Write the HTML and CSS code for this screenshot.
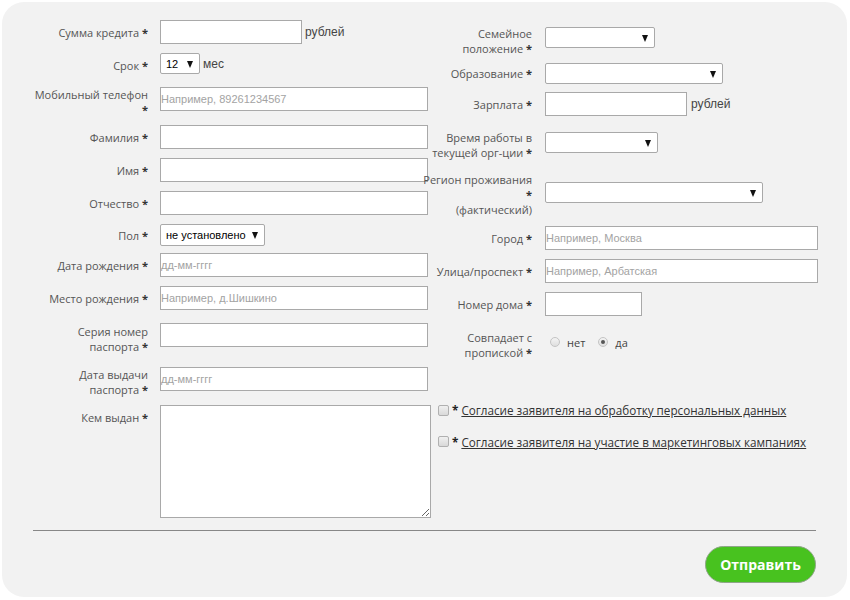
FILE: index.html
```html
<!DOCTYPE html>
<html lang="ru">
<head>
<meta charset="utf-8">
<title>Заявка на кредит</title>
<link rel="stylesheet" href="styles.css">
</head>
<body>
<form class="panel">
  <div class="columns">
    <div class="col-left">
      <label class="lbl">Сумма кредита <b class="req">*</b></label>
      <div class="ctl"><input class="inp w142" type="text"><span class="unit">рублей</span></div>

      <label class="lbl">Срок <b class="req">*</b></label>
      <div class="ctl"><span class="selwrap w39"><select class="sel"><option>12</option></select></span><span class="unit">мес</span></div>

      <label class="lbl p0">Мобильный телефон<br><b class="req">*</b></label>
      <div class="ctl"><input class="inp w267" type="text" placeholder="Например, 89261234567"></div>

      <label class="lbl">Фамилия <b class="req">*</b></label>
      <div class="ctl"><input class="inp w267" type="text"></div>

      <label class="lbl">Имя <b class="req">*</b></label>
      <div class="ctl"><input class="inp w267" type="text"></div>

      <label class="lbl">Отчество <b class="req">*</b></label>
      <div class="ctl"><input class="inp w267" type="text"></div>

      <label class="lbl p4">Пол <b class="req">*</b></label>
      <div class="ctl"><span class="selwrap w104"><select class="sel h22"><option>не установлено</option></select></span></div>

      <label class="lbl">Дата рождения <b class="req">*</b></label>
      <div class="ctl"><input class="inp w267" type="text" placeholder="дд-мм-гггг"></div>

      <label class="lbl">Место рождения <b class="req">*</b></label>
      <div class="ctl"><input class="inp w267" type="text" placeholder="Например, д.Шишкино"></div>

      <label class="lbl p1">Серия номер<br>паспорта <b class="req">*</b></label>
      <div class="ctl"><input class="inp w267" type="text"></div>

      <label class="lbl p0">Дата выдачи<br>паспорта <b class="req">*</b></label>
      <div class="ctl"><input class="inp w267" type="text" placeholder="дд-мм-гггг"></div>

      <label class="lbl">Кем выдан <b class="req">*</b></label>
      <div class="ctl"><textarea class="area"></textarea></div>
    </div>

    <div class="right">
      <div class="col-right">
        <label class="lbl up1">Семейное<br>положение <b class="req">*</b></label>
        <div class="ctl"><span class="selwrap w110"><select class="sel h20"><option></option></select></span></div>

        <label class="lbl p3">Образование <b class="req">*</b></label>
        <div class="ctl"><span class="selwrap w178"><select class="sel h20"><option></option></select></span></div>

        <label class="lbl">Зарплата <b class="req">*</b></label>
        <div class="ctl"><input class="inp w141" type="text"><span class="unit u4">рублей</span></div>

        <label class="lbl up2">Время работы в<br>текущей орг-ции <b class="req">*</b></label>
        <div class="ctl"><span class="selwrap w113"><select class="sel h20"><option></option></select></span></div>

        <label class="lbl region">Регион проживания<br><b class="req">*</b><br>(фактический)</label>
        <div class="ctl"><span class="selwrap w218"><select class="sel h20"><option></option></select></span></div>

        <label class="lbl">Город <b class="req">*</b></label>
        <div class="ctl"><input class="inp w272" type="text" placeholder="Например, Москва"></div>

        <label class="lbl">Улица/проспект <b class="req">*</b></label>
        <div class="ctl"><input class="inp w272" type="text" placeholder="Например, Арбатская"></div>

        <label class="lbl">Номер дома <b class="req">*</b></label>
        <div class="ctl"><input class="inp w96" type="text"></div>

        <label class="lbl p0">Совпадает с<br>пропиской <b class="req">*</b></label>
        <div class="ctl radios">
          <label class="opt"><input class="radio" type="radio" name="same">нет</label>
          <label class="opt"><input class="radio" type="radio" name="same" checked>да</label>
        </div>
      </div>

      <div class="agree">
        <div class="agree-row"><input class="check" type="checkbox"><b class="star">*</b><a class="link" href="#">Согласие заявителя на обработку персональных данных </a></div>
        <div class="agree-row"><input class="check" type="checkbox"><b class="star">*</b><a class="link" href="#">Согласие заявителя на участие в маркетинговых кампаниях</a></div>
      </div>
    </div>
  </div>

  <div class="footer">
    <button class="send" type="button">Отправить</button>
  </div>
</form>
</body>
</html>
```

FILE: styles.css
```css
body {
  margin: 0;
  background: #ffffff;
  font-family: "Open Sans", "Liberation Sans", sans-serif;
}

.panel {
  display: block;
  margin: 2px 0 0 2px;
  width: 845px;
  height: 595px;
  box-sizing: border-box;
  background: #f2f2f2;
  border-radius: 22px;
  padding-top: 18px;
}

.columns {
  display: flex;
  padding-left: 18px;
}

.col-left {
  width: 400px;
  flex-shrink: 0;
  display: grid;
  grid-template-columns: 128px 1fr;
  column-gap: 12px;
  grid-template-rows: 33px 34px 38px 33px 33px 33px 29px 33px 37px 44px 38px auto;
}

.right {
  width: 400px;
  flex-shrink: 0;
  padding-top: 7px;
}

.col-right {
  display: grid;
  grid-template-columns: 112px 1fr;
  column-gap: 13px;
  grid-template-rows: 36px 29px 40px 50px 44px 33px 33px 38px auto;
}

.lbl {
  text-align: right;
  font-size: 11px;
  line-height: 15px;
  color: #555555;
  white-space: nowrap;
  padding-top: 5px;
  align-self: start;
}

.lbl.p0 { padding-top: 0; }
.lbl.p1 { padding-top: 1px; }
.lbl.p3 { padding-top: 3px; }
.lbl.p4 { padding-top: 4px; }
.lbl.up1 { padding-top: 0; margin-top: -1px; }
.lbl.up2 { padding-top: 0; margin-top: -2px; }
.lbl.region { padding-top: 0; margin-top: -10px; }

.req {
  color: #333333;
  font-weight: 700;
}

.ctl {
  display: flex;
  align-items: center;
  align-self: start;
  gap: 3px;
}

.unit {
  font-family: "Liberation Sans", Arial, sans-serif;
  font-size: 12px;
  color: #444444;
  white-space: nowrap;
}

.unit.u4 { margin-left: 1px; }

.inp {
  box-sizing: border-box;
  height: 24px;
  margin: 0;
  border: 1px solid #a9a9a9;
  border-radius: 0;
  background: #ffffff;
  padding: 0;
  font-family: "Liberation Sans", Arial, sans-serif;
  font-size: 11px;
  color: #333333;
  flex-shrink: 0;
  outline: none;
}

.inp::placeholder { color: #a3a3a3; }

.w96 { width: 97px; }
.w141 { width: 142px; }
.w142 { width: 142px; }
.w267 { width: 268px; }
.w272 { width: 273px; }

.selwrap {
  position: relative;
  display: inline-block;
  flex-shrink: 0;
}

.selwrap::after {
  content: "";
  position: absolute;
  right: 7px;
  top: 50%;
  margin-top: -3px;
  border-left: 3.5px solid transparent;
  border-right: 3.5px solid transparent;
  border-top: 7px solid #111111;
  pointer-events: none;
}

.w39 { width: 40px; }
.w104 { width: 105px; }
.w110 { width: 110px; }
.w113 { width: 113px; }
.w178 { width: 178px; }
.w218 { width: 218px; }

.sel {
  -webkit-appearance: none;
  appearance: none;
  display: block;
  box-sizing: border-box;
  width: 100%;
  height: 21px;
  margin: 0;
  border: 1px solid #a9a9a9;
  border-radius: 2px;
  background: #ffffff;
  padding: 0 0 0 5px;
  font-family: "Liberation Sans", Arial, sans-serif;
  font-size: 11px;
  color: #000000;
  outline: none;
}

.sel.h20 { height: 21px; }
.sel.h22 { height: 22px; }

.area {
  display: block;
  box-sizing: border-box;
  width: 271px;
  height: 113px;
  margin: 0;
  border: 1px solid #a9a9a9;
  background: #ffffff;
  font-family: "Liberation Sans", Arial, sans-serif;
  font-size: 11px;
  flex-shrink: 0;
  outline: none;
}

.radios {
  height: 24px;
  gap: 0;
  padding-left: 5px;
}

.opt {
  display: flex;
  align-items: center;
  font-size: 11px;
  color: #444444;
  margin-right: 13px;
}

.radio {
  -webkit-appearance: none;
  appearance: none;
  box-sizing: border-box;
  width: 10px;
  height: 10px;
  margin: 0 7px 0 0;
  border: 1px solid #c4c4c4;
  border-radius: 50%;
  background: linear-gradient(#f4f4f4, #dedede);
  position: relative;
}

.radio:checked::after {
  content: "";
  position: absolute;
  left: 2px;
  top: 2px;
  width: 4px;
  height: 4px;
  border-radius: 50%;
  background: #555555;
}

.agree {
  margin-top: 41px;
  padding-left: 18px;
}

.agree-row {
  display: flex;
  align-items: center;
  height: 18px;
  margin-bottom: 13.5px;
  font-size: 11.7px;
  white-space: nowrap;
}

.check {
  -webkit-appearance: none;
  appearance: none;
  box-sizing: border-box;
  width: 11px;
  height: 11px;
  margin: 0 3px 0 0;
  border: 1px solid #b0b0b0;
  border-radius: 2px;
  background: linear-gradient(#f0f0f0, #d9d9d9);
  flex-shrink: 0;
}

.star {
  color: #222222;
  font-weight: 700;
  margin-right: 3px;
}

.link {
  color: #333333;
  text-decoration: underline;
}

.footer {
  margin: 12px 31px 0 31px;
  border-top: 1px solid #888888;
  padding-top: 15px;
  display: flex;
  justify-content: flex-end;
}

.send {
  box-sizing: border-box;
  width: 111px;
  height: 37px;
  margin: 0;
  border: 1px solid #8fa589;
  border-radius: 19px;
  background: #48c21f;
  color: #ffffff;
  font-family: "Open Sans", sans-serif;
  font-size: 14px;
  font-weight: 700;
  padding: 0;
}
```
